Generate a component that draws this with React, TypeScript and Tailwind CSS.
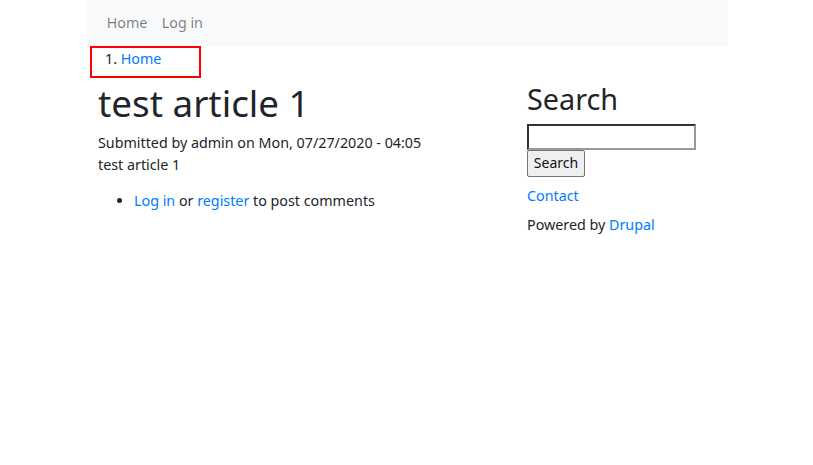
export default function App() {
  return (
    <div className="min-h-screen bg-white text-[#212529] text-[14.3px] leading-[21.5px] [font-family:'Noto_Sans',sans-serif]">
      <div className="ml-[86px] w-[642px]">
        <nav className="flex h-[46px] items-center bg-[#f8f9fa] px-[13.5px]">
          <a className="px-[7.2px] text-black/50" href="#">Home</a>
          <a className="px-[7.2px] text-black/50" href="#">Log in</a>
        </nav>

        <div className="ml-[4px] h-[32px] w-[111px] border-2 border-[#ff0000]">
          <ol className="list-inside list-decimal pl-[13px]">
            <li>
              <a className="text-[#007bff]" href="#">Home</a>
            </li>
          </ol>
        </div>

        <div className="mt-[4px] flex">
          <main className="w-[441px] pl-[12px]">
            <h1 className="mb-[7.2px] text-[36.8px] leading-[43.2px] font-normal">test article 1</h1>
            <div>Submitted by admin on Mon, 07/27/2020 - 04:05</div>
            <p className="mb-[14.4px]">test article 1</p>
            <ul className="list-disc pl-[36px]">
              <li>
                <a className="text-[#007bff]" href="#">Log in</a> or{" "}
                <a className="text-[#007bff]" href="#">register</a> to post comments
              </li>
            </ul>
          </main>

          <aside className="flex-1">
            <h2 className="mb-[7.2px] text-[28.8px] leading-[34.56px] font-normal">Search</h2>
            <form className="mt-[1px]" onSubmit={(e) => e.preventDefault()}>
              <input
                type="search"
                className="block h-[26px] w-[169px] border-2 border-t-[#333] border-l-[#333] border-r-[#999] border-b-[#999] bg-white px-1 outline-none"
              />
              <button
                type="submit"
                className="block h-[27px] w-[58px] rounded-[2px] border border-[#767676] bg-[#efefef] text-[14px] leading-[20px] text-[#111]"
              >
                Search
              </button>
            </form>
            <div className="mt-[8px]">
              <a className="text-[#007bff]" href="#">Contact</a>
            </div>
            <div className="mt-[8px]">
              Powered by <a className="text-[#007bff]" href="#">Drupal</a>
            </div>
          </aside>
        </div>
      </div>
    </div>
  );
}
